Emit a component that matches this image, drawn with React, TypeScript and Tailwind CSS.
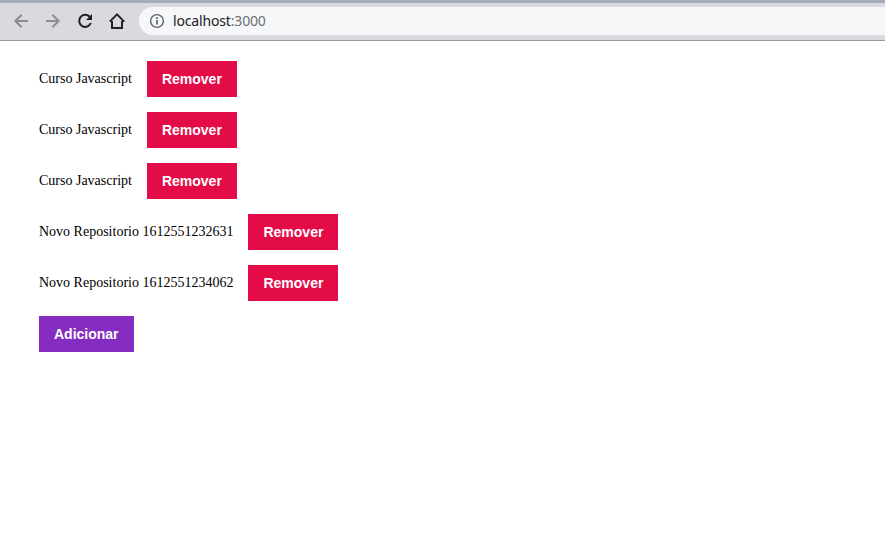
import type { ReactNode } from "react";

function Icon({ className, children }: { className: string; children: ReactNode }) {
  return (
    <span className={`flex size-8 shrink-0 items-center justify-center ${className}`}>{children}</span>
  );
}

function Toolbar() {
  return (
    <header className="flex h-[41px] items-center border-t-[3px] border-b border-t-[#a5abb8] border-b-[#96969b] bg-[#dad9df] pb-px pl-[5px]">
      <Icon className="text-[#8b8b90]">
        <svg className="size-5" viewBox="0 0 20 20" fill="none" stroke="currentColor" strokeWidth="2">
          <path d="M17 10H4.5M10.7 3.7 4.4 10l6.3 6.3" />
        </svg>
      </Icon>
      <Icon className="text-[#8b8b90]">
        <svg className="size-5" viewBox="0 0 20 20" fill="none" stroke="currentColor" strokeWidth="2">
          <path d="M3 10h12.5M9.3 3.7l6.3 6.3-6.3 6.3" />
        </svg>
      </Icon>
      <Icon className="text-[#202024]">
        <svg className="size-5" viewBox="0 0 20 20" fill="none" stroke="currentColor">
          <path d="M14.6 5.8A6 6 0 1 0 15.8 12" strokeWidth="2" />
          <path d="M17 3v6h-6z" fill="currentColor" stroke="none" />
        </svg>
      </Icon>
      <Icon className="text-[#202024]">
        <svg className="size-5" viewBox="0 0 20 20" fill="none" stroke="currentColor" strokeWidth="2">
          <path d="M2.8 10.6 10 3.4l7.2 7.2M5 10v7h10v-7" />
        </svg>
      </Icon>
      <div className="ml-[6px] flex h-7 flex-1 items-center rounded-l-full bg-[#f6f7f9] pl-[10px]">
        <svg className="size-4 shrink-0" viewBox="0 0 16 16" fill="none" stroke="#5f6368">
          <circle cx="8" cy="8" r="6.4" strokeWidth="1.4" />
          <path d="M8 7v4.5M8 4.3v1.7" strokeWidth="1.7" />
        </svg>
        <span className="ml-2 font-['Noto_Sans',sans-serif] text-[14px] leading-5 tracking-[-0.16px] text-[#202124]">
          localhost<span className="text-[#6a6e73]">:3000</span>
        </span>
      </div>
    </header>
  );
}

const repositories = [
  "Curso Javascript",
  "Curso Javascript",
  "Curso Javascript",
  "Novo Repositorio 1612551232631",
  "Novo Repositorio 1612551234062",
];

const button =
  "h-9 px-[15px] font-['Liberation_Sans',sans-serif] text-[14px] leading-4 font-bold text-white";

export default function App() {
  return (
    <div className="h-[553px] overflow-hidden bg-white">
      <Toolbar />
      <main className="flex flex-col items-start gap-[15px] pt-5 pl-[39px]">
        <ul className="flex flex-col gap-[15px]">
          {repositories.map((title, index) => (
            <li key={index} className="flex items-center">
              <span className="mr-[15px] font-['Liberation_Serif',serif] text-[14px] leading-4 text-black">
                {title}
              </span>
              <button className={`${button} bg-[#e30c47]`}>Remover</button>
            </li>
          ))}
        </ul>
        <button className={`${button} bg-[#842dc0]`}>Adicionar</button>
      </main>
    </div>
  );
}
